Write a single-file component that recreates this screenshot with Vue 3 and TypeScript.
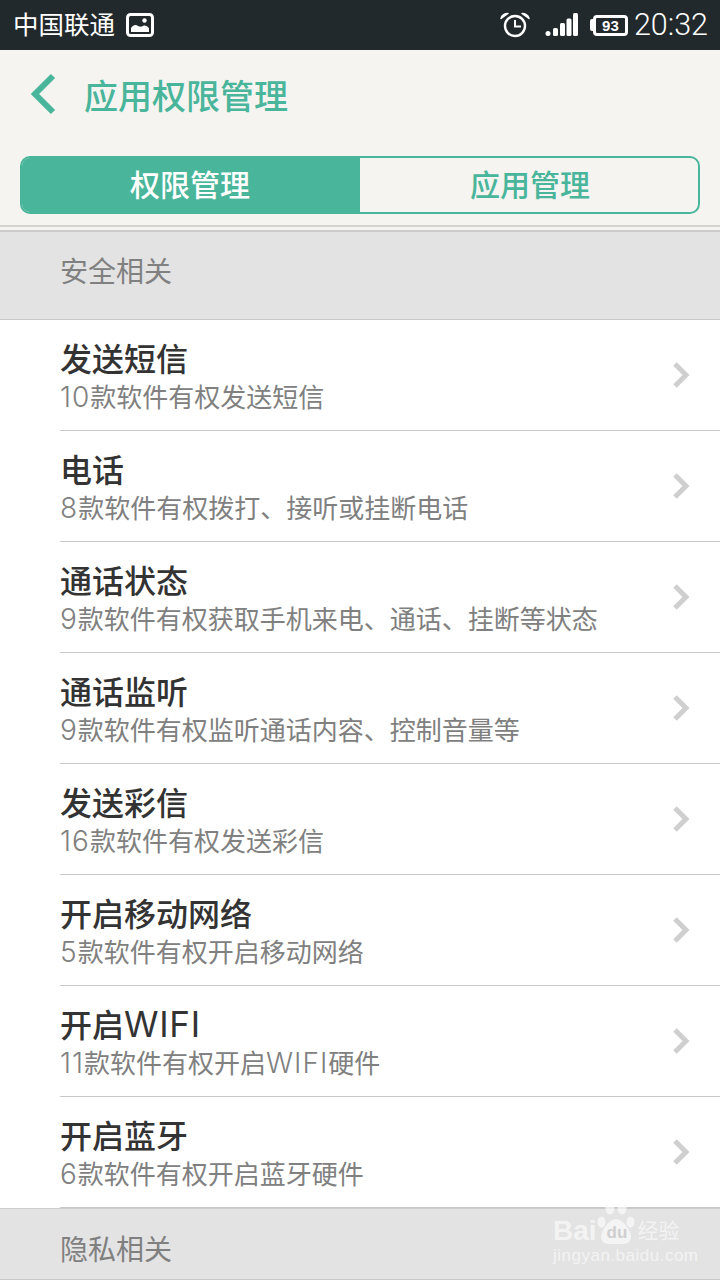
<template>
  <div class="phone">
    <div class="statusbar">
      <div class="status-left">
        <span class="carrier">中国联通</span>
        <svg class="pic-icon" width="28" height="24" viewBox="0 0 28 24">
          <rect x="1.500" y="1.500" width="25" height="21" rx="3" fill="none" stroke="#fff" stroke-width="3" />
          <path d="M5 19v-4c2-3 5-4 7-2 2 1 3 1 5 0 2-1 4 0 6 2v4z" fill="#fff" />
          <circle cx="18.500" cy="7.500" r="2.200" fill="#fff" />
        </svg>
      </div>
      <div class="status-right">
        <svg class="alarm" width="30" height="26" viewBox="0 0 30 26">
          <circle cx="15" cy="14" r="10" fill="none" stroke="#fff" stroke-width="2.400" />
          <path d="M15 8v6.500h6" fill="none" stroke="#fff" stroke-width="2" />
          <path d="M1 6.500C2 3 4.500 1.500 8 1.500zM29 6.500C28 3 25.500 1.500 22 1.500z" fill="#fff" stroke="#fff" stroke-width="1.500" stroke-linejoin="round" />
        </svg>
        <svg class="signal" width="33" height="24" viewBox="0 0 33 24">
          <circle cx="3" cy="20.500" r="2.500" fill="#fff" />
          <rect x="8" y="15" width="5" height="8" rx="1.500" fill="#fff" />
          <rect x="15" y="10" width="5" height="13" rx="1.500" fill="#fff" />
          <rect x="21.500" y="5.500" width="5" height="17.500" rx="1.500" fill="#fff" />
          <rect x="28" y="0" width="5" height="23" rx="1.500" fill="#fff" />
        </svg>
        <div class="battery">
          <span class="battery-tip"></span>
          <span class="battery-body">93</span>
        </div>
        <span class="clock">20:32</span>
      </div>
    </div>

    <header class="topbar">
      <div class="title-row">
        <svg class="back" width="26" height="42" viewBox="0 0 26 42">
          <path d="M23 3 5 21l18 18" fill="none" stroke="#49b59a" stroke-width="6" />
        </svg>
        <h1 class="title">应用权限管理</h1>
      </div>
      <div class="tabs">
        <div class="tab active">权限管理</div>
        <div class="tab">应用管理</div>
      </div>
      <div class="divider"></div>
    </header>

    <div class="section">安全相关</div>
    <ul class="list">
      <li v-for="item in items" :key="item.title" class="row">
        <div class="row-text">
          <div class="row-title">
            <span v-for="(p, i) in parts(item.title)" :key="i" :class="{ latin: p.latin }">{{ p.text }}</span>
          </div>
          <div class="row-sub">
            <span v-for="(p, i) in parts(item.sub)" :key="i" :class="{ latin: p.latin }">{{ p.text }}</span>
          </div>
        </div>
        <svg class="chevron" width="18" height="26" viewBox="0 0 18 26">
          <path d="M3 2 14 13 3 24" fill="none" stroke="#cfcfcf" stroke-width="5" />
        </svg>
      </li>
    </ul>
    <div class="section last">隐私相关</div>

    <div class="watermark">
      <div class="wm-top">
        <span class="wm-bai">Bai</span>
        <div class="wm-paw">
          <svg width="38" height="42" viewBox="0 0 38 42">
            <ellipse cx="4.500" cy="20" rx="4" ry="5.500" />
            <ellipse cx="13" cy="6.500" rx="4.500" ry="6" />
            <ellipse cx="25" cy="6.500" rx="4.500" ry="6" />
            <ellipse cx="33.500" cy="20" rx="4" ry="5.500" />
            <path d="M19 17c-6 0-15 11-15 18 0 5 4 7 8 7h14c4 0 8-2 8-7 0-7-9-18-15-18z" />
          </svg>
          <span class="wm-du">du</span>
        </div>
        <span class="wm-cn">经验</span>
      </div>
      <div class="wm-url">jingyan.baidu.com</div>
    </div>
  </div>
</template>

<script setup lang="ts">
interface PermItem {
  title: string
  sub: string
}

const items: PermItem[] = [
  { title: '发送短信', sub: '10款软件有权发送短信' },
  { title: '电话', sub: '8款软件有权拨打、接听或挂断电话' },
  { title: '通话状态', sub: '9款软件有权获取手机来电、通话、挂断等状态' },
  { title: '通话监听', sub: '9款软件有权监听通话内容、控制音量等' },
  { title: '发送彩信', sub: '16款软件有权发送彩信' },
  { title: '开启移动网络', sub: '5款软件有权开启移动网络' },
  { title: '开启WIFI', sub: '11款软件有权开启WIFI硬件' },
  { title: '开启蓝牙', sub: '6款软件有权开启蓝牙硬件' },
]

// latin runs are drawn a bit larger than the CJK around them
function parts(text: string) {
  return text
    .split(/([0-9A-Z]+)/)
    .filter(Boolean)
    .map((t) => ({ text: t, latin: /^[0-9A-Z]/.test(t) }))
}
</script>

<style scoped>
.phone {
  position: relative;
  width: 720px;
  height: 1280px;
  overflow: hidden;
  background: #fff;
  font-family: Inter, "Noto Sans CJK SC", sans-serif;
}
.statusbar {
  height: 50px;
  background: #22292c;
  color: #fff;
  display: flex;
  align-items: center;
  justify-content: space-between;
  padding: 0 12px 0 13px;
}
.status-left {
  display: flex;
  align-items: center;
  gap: 11px;
}
.carrier {
  font-size: 25.500px;
  line-height: 50px;
}
.pic-icon {
  display: block;
}
.status-right {
  display: flex;
  align-items: center;
}
.alarm {
  display: block;
  margin-right: 15px;
}
.signal {
  display: block;
  margin-right: 12px;
}
.battery {
  display: flex;
  align-items: center;
  margin-right: 6px;
}
.battery-tip {
  width: 3px;
  height: 12px;
  background: #fff;
  border-radius: 2px 0 0 2px;
}
.battery-body {
  width: 35px;
  height: 21px;
  box-sizing: border-box;
  border: 3px solid #fff;
  border-radius: 4px;
  font-family: "Liberation Sans", sans-serif;
  font-size: 15px;
  font-weight: 700;
  line-height: 15px;
  text-align: center;
}
.clock {
  font-family: Roboto, sans-serif;
  font-weight: 300;
  font-size: 30.500px;
  line-height: 50px;
}
.topbar {
  height: 180px;
  box-sizing: border-box;
  background: #f5f4f0;
  padding: 0 20px;
}
.title-row {
  height: 88px;
  margin-bottom: 18px;
  display: flex;
  align-items: center;
  padding-left: 10px;
}
.back {
  display: block;
  margin-right: 28px;
}
.title {
  margin: 0;
  font-size: 34px;
  font-weight: 500;
  color: #49b59a;
}
.tabs {
  display: flex;
  height: 58px;
  box-sizing: border-box;
  border: 2px solid #49b59a;
  border-radius: 10px;
  overflow: hidden;
}
.tab {
  flex: 1;
  display: flex;
  align-items: center;
  justify-content: center;
  padding: 0 0 4px 2px;
  font-size: 30px;
  font-weight: 500;
  color: #49b59a;
}
.tab.active {
  padding: 0 2px 4px 0;
  background: #49b59a;
  color: #fff;
}
.divider {
  height: 2px;
  margin: 11px -20px 0;
  background: #d2d2d0;
}
.section {
  height: 90px;
  box-sizing: border-box;
  background: #e3e3e3;
  border-top: 2px solid #cbcbcb;
  border-bottom: 1px solid #c9c9c9;
  padding-left: 60px;
  font-size: 28px;
  line-height: 80px;
  color: #808080;
}
.section.last {
  height: 72px;
  border-top-width: 1px;
  line-height: 82px;
}
.list {
  margin: 0;
  padding: 0 0 0 60px;
  list-style: none;
}
.row {
  height: 111px;
  box-sizing: border-box;
  border-bottom: 1px solid #c9c9c9;
  display: flex;
  align-items: center;
  justify-content: space-between;
  padding-right: 30px;
}
.row-text {
  padding-top: 6px;
}
.row-title {
  font-size: 32px;
  font-weight: 500;
  line-height: 40px;
  color: #333;
}
.row-title .latin {
  font-size: 35px;
  font-weight: 400;
  line-height: 1;
  letter-spacing: 0.700px;
}
.row-sub {
  font-size: 26px;
  line-height: 36px;
  color: #808080;
}
.row-sub .latin {
  font-size: 28px;
  font-weight: 300;
  line-height: 1;
  letter-spacing: 1px;
}
.chevron {
  display: block;
}
.watermark {
  position: absolute;
  left: 553px;
  top: 1202px;
  color: rgba(255, 255, 255, 0.6);
}
.wm-top {
  display: flex;
  align-items: flex-end;
  height: 42px;
}
.wm-bai {
  font-family: "Liberation Sans", sans-serif;
  font-size: 28px;
  font-weight: 700;
  line-height: 26px;
}
.wm-paw {
  position: relative;
  fill: rgba(255, 255, 255, 0.6);
  margin-right: 3px;
}
.wm-paw svg {
  display: block;
}
.wm-du {
  position: absolute;
  left: 10px;
  bottom: 1px;
  font-family: "Liberation Sans", sans-serif;
  font-size: 17px;
  font-weight: 700;
  line-height: 20px;
  color: #cfcfcf;
}
.wm-cn {
  font-size: 21px;
  line-height: 26px;
}
.wm-url {
  margin-top: 2px;
  font-family: "Liberation Sans", sans-serif;
  font-size: 17px;
  line-height: 20px;
  letter-spacing: 0.500px;
}
</style>
